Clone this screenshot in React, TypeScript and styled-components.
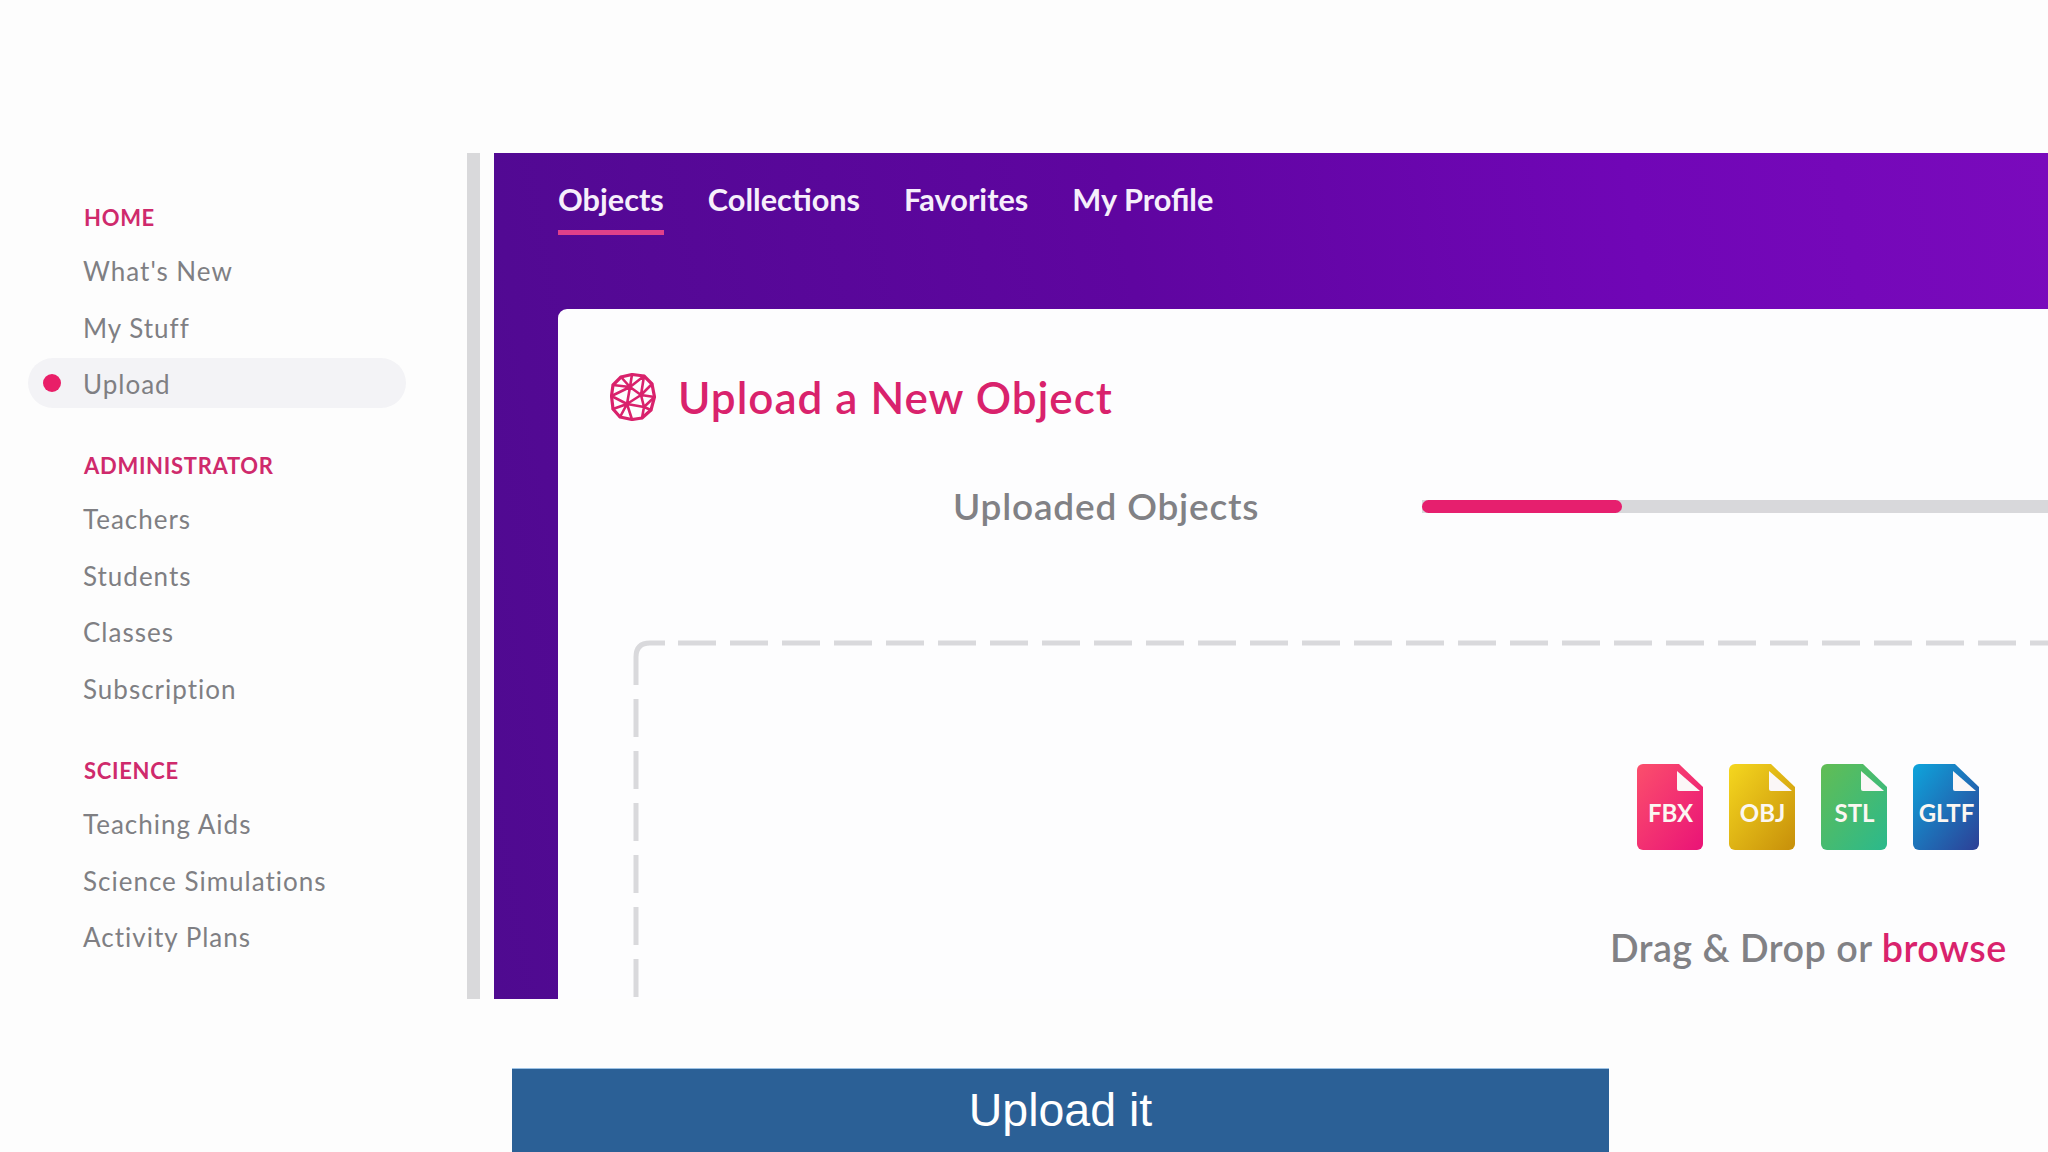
import React from "react";
import styled, { createGlobalStyle } from "styled-components";

const GlobalStyle = createGlobalStyle`
  html, body {
    margin: 0;
    padding: 0;
    background: #fdfdfd;
  }
  body {
    width: 2048px;
    height: 1152px;
    overflow: hidden;
    font-family: "Lato", "Liberation Sans", sans-serif;
  }
`;

const Page = styled.div`
  width: 2048px;
  height: 1152px;
  padding-top: 153px;
  box-sizing: border-box;
  overflow: hidden;
`;

const Frame = styled.div`
  display: flex;
  height: 846px;
`;

const Sidebar = styled.nav`
  width: 467px;
  flex-shrink: 0;
  box-sizing: border-box;
  padding: 51px 61px 0 28px;
`;

const Group = styled.div`
  margin-bottom: 44px;
`;

const GroupTitle = styled.div`
  height: 28px;
  line-height: 28px;
  padding-left: 56px;
  margin-bottom: 13px;
  font-size: 22px;
  font-weight: 700;
  letter-spacing: 0.7px;
  color: #cf2a6c;
`;

const NavItem = styled.div<{ $active?: boolean }>`
  position: relative;
  height: 50px;
  line-height: 52px;
  margin-bottom: 6.6px;
  padding-left: 55px;
  font-size: 26px;
  letter-spacing: 1px;
  color: #7f7f83;
  border-radius: 25px;
  background: ${(p) => (p.$active ? "#f3f3f6" : "transparent")};
`;

const ActiveDot = styled.span`
  position: absolute;
  left: 15px;
  top: 16px;
  width: 18px;
  height: 18px;
  border-radius: 50%;
  background: #e91e68;
`;

const Scrollbar = styled.div`
  width: 13px;
  flex-shrink: 0;
  background: #d9d9db;
`;

const Panel = styled.main`
  margin-left: 14px;
  flex: 1;
  min-width: 0;
  display: flex;
  flex-direction: column;
  padding-left: 64px;
  background: linear-gradient(80deg, #4f0a90 0%, #5f05a0 45%, #7006b6 75%, #7a0abc 100%);
`;

const Tabs = styled.div`
  display: flex;
  gap: 44px;
  height: 156px;
  flex-shrink: 0;
  box-sizing: border-box;
  padding-top: 28px;
`;

const Tab = styled.div<{ $active?: boolean }>`
  height: 54px;
  box-sizing: border-box;
  line-height: 37px;
  font-size: 30.7px;
  font-weight: 700;
  color: #f6effb;
  border-bottom: 5px solid ${(p) => (p.$active ? "#e0408a" : "transparent")};
`;

const Card = styled.section`
  flex: 1;
  width: 1600px;
  min-height: 0;
  overflow: hidden;
  border-radius: 9px 0 0 0;
  background: #fdfdfe;
  padding: 62px 0 0 48px;
  box-sizing: border-box;
`;

const TitleRow = styled.div`
  display: flex;
  align-items: center;
  gap: 22px;
  height: 52px;
  padding-left: 4px;
`;

const Title = styled.h1`
  margin: 0;
  font-size: 44px;
  font-weight: 600;
  line-height: 52px;
  letter-spacing: 1px;
  color: #d9226c;
`;

const ProgressRow = styled.div`
  display: flex;
  align-items: center;
  height: 44px;
  margin-top: 61px;
  padding-left: 347px;
`;

const ProgressLabel = styled.div`
  width: 469px;
  flex-shrink: 0;
  padding-bottom: 2px;
  font-size: 37px;
  font-weight: 600;
  letter-spacing: 0.8px;
  color: #818185;
`;

const Track = styled.div`
  flex: 1;
  height: 13px;
  background: #d8d8db;
`;

const Fill = styled.div`
  height: 100%;
  border-radius: 7px;
  background: #e61f6e;
`;

const DropZone = styled.div`
  position: relative;
  margin-top: 112px;
  margin-left: 27px;
  height: 500px;
  padding-top: 124px;
  box-sizing: border-box;
`;

const DashedEdge = styled.svg`
  position: absolute;
  left: 0;
  top: 0;
  width: 1600px;
  height: 500px;
`;

const DropContent = styled.div`
  position: relative;
  width: 1800px;
  padding-left: 1004px;
  box-sizing: border-box;
`;

const FileRow = styled.div`
  display: flex;
  gap: 25px;
`;

const FileBadge = styled.div`
  position: relative;
  width: 67px;
  height: 86px;
`;

const FileLabel = styled.span`
  position: absolute;
  left: 0;
  right: 0;
  top: 34px;
  text-align: center;
  font-size: 24px;
  line-height: 30px;
  font-weight: 700;
  color: #fbf7f2;
`;

const DropText = styled.div`
  margin: 76px 0 0 -27px;
  font-size: 37.7px;
  font-weight: 600;
  line-height: 44px;
  letter-spacing: 0.5px;
  color: #818185;
  white-space: nowrap;
`;

const Browse = styled.span`
  color: #d9226c;
`;

const Banner = styled.div`
  width: 1097px;
  height: 84px;
  margin: 69px 0 0 512px;
  box-sizing: border-box;
  border-top: 1px solid #9cc2e5;
  background: #2b6096;
  color: #ffffff;
  font-family: "Liberation Sans", Arial, sans-serif;
  font-size: 46.5px;
  line-height: 82px;
  text-align: center;
`;

const SphereIcon = () => (
  <svg width="46" height="48" viewBox="0 0 46 48" fill="none" stroke="#d9226c" strokeWidth="2.6" strokeLinejoin="round" strokeLinecap="round">
    <polygon points="22,1.5 34,3 42,11 44.5,24 41,37 32,45 22,46.5 10,44 3,36 1.5,23 3,12 11,4" strokeWidth="3.2" />
    <path d="M22 1.5 L20 14 M11 4 L20 14 M34 3 L20 14 M34 3 L31 22 M20 14 L31 22 M42 11 L31 22 M44.5 24 L31 22 M31 22 L34 34 M44.5 24 L34 34 M41 37 L34 34 M32 45 L34 34 M17 31 L34 34 M31 22 L17 31 M20 14 L17 31 M17 31 L22 46.5 M17 31 L10 44 M17 31 L3 36 M17 31 L1.5 23 M20 14 L1.5 23 M3 12 L20 14" />
  </svg>
);

const FileIcon = ({ id, from, to }: { id: string; from: string; to: string }) => (
  <svg width="67" height="86" viewBox="0 0 67 86">
    <defs>
      <linearGradient id={id} x1="0" y1="0" x2="1" y2="1">
        <stop offset="0" stopColor={from} />
        <stop offset="1" stopColor={to} />
      </linearGradient>
    </defs>
    <path d="M6 0 H42 L66 23 V80 a6 6 0 0 1 -6 6 H6 a6 6 0 0 1 -6 -6 V6 a6 6 0 0 1 6 -6 Z" fill={`url(#${id})`} />
    <path d="M40 7 L63 27 H42 a2 2 0 0 1 -2 -2 Z" fill="#fbf7f7" />
  </svg>
);

const sections = [
  { title: "HOME", items: ["What's New", "My Stuff", "Upload"] },
  { title: "ADMINISTRATOR", items: ["Teachers", "Students", "Classes", "Subscription"] },
  { title: "SCIENCE", items: ["Teaching Aids", "Science Simulations", "Activity Plans"] },
];

const tabs = ["Objects", "Collections", "Favorites", "My Profile"];

const files = [
  { label: "FBX", from: "#fb4f6c", to: "#ea1377" },
  { label: "OBJ", from: "#f5d71f", to: "#c78f0a" },
  { label: "STL", from: "#62bd54", to: "#2bb98c" },
  { label: "GLTF", from: "#0ea5dc", to: "#2d3f96" },
];

const App = () => (
  <Page>
    <GlobalStyle />
    <Frame>
      <Sidebar>
        {sections.map((section) => (
          <Group key={section.title}>
            <GroupTitle>{section.title}</GroupTitle>
            {section.items.map((item) => (
              <NavItem key={item} $active={item === "Upload"}>
                {item === "Upload" && <ActiveDot />}
                {item}
              </NavItem>
            ))}
          </Group>
        ))}
      </Sidebar>
      <Scrollbar />
      <Panel>
        <Tabs>
          {tabs.map((tab) => (
            <Tab key={tab} $active={tab === "Objects"}>
              {tab}
            </Tab>
          ))}
        </Tabs>
        <Card>
          <TitleRow>
            <SphereIcon />
            <Title>Upload a New Object</Title>
          </TitleRow>
          <ProgressRow>
            <ProgressLabel>Uploaded Objects</ProgressLabel>
            <Track>
              <Fill style={{ width: 200 }} />
            </Track>
          </ProgressRow>
          <DropZone>
            <DashedEdge fill="none" stroke="#d9d9dc" strokeWidth="5">
              <path d="M3 45 V17 Q3 3 17 3 H32" />
              <path d="M45 3 H1600" strokeDasharray="38 14" />
              <path d="M3 59 V500" strokeDasharray="38 14" />
            </DashedEdge>
            <DropContent>
              <FileRow>
                {files.map((file) => (
                  <FileBadge key={file.label}>
                    <FileIcon id={`file-${file.label}`} from={file.from} to={file.to} />
                    <FileLabel>{file.label}</FileLabel>
                  </FileBadge>
                ))}
              </FileRow>
              <DropText>
                Drag &amp; Drop or <Browse>browse</Browse>
              </DropText>
            </DropContent>
          </DropZone>
        </Card>
      </Panel>
    </Frame>
    <Banner>Upload it</Banner>
  </Page>
);

export default App;
